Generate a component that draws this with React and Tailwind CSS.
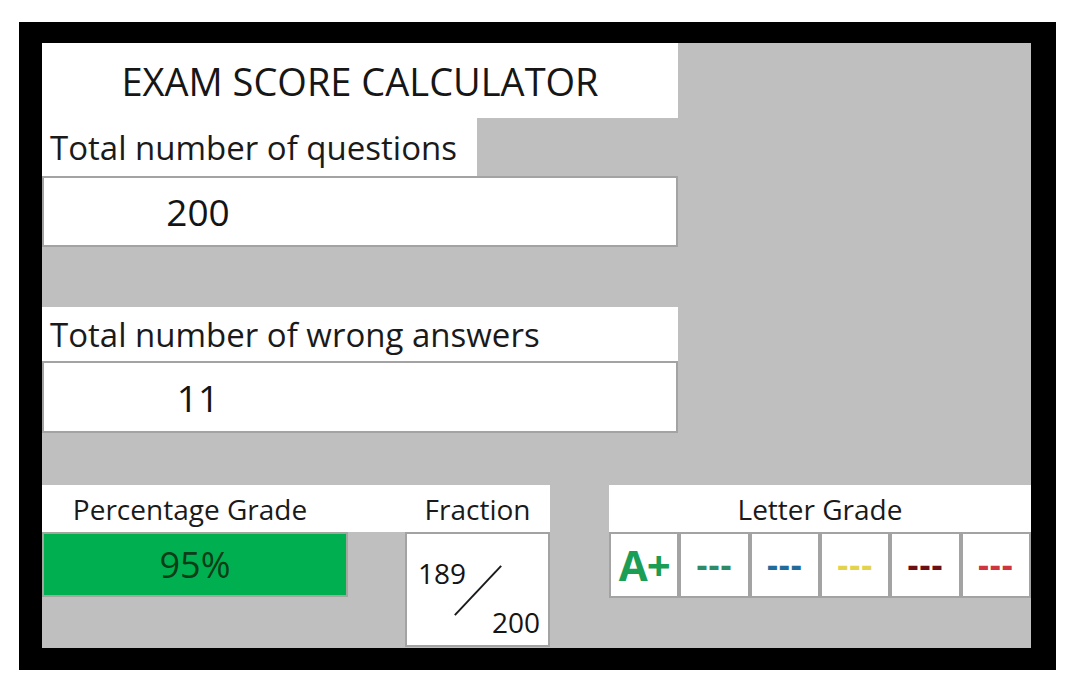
// Exam score calculator sheet: inputs on the left, results along the bottom
const grades = [
  { label: "A+", color: "text-[#1a9e55]", big: true },
  { label: "---", color: "text-[#2f8a68]" },
  { label: "---", color: "text-[#1f6c9c]" },
  { label: "---", color: "text-[#e3d24c]" },
  { label: "---", color: "text-[#6b0f14]" },
  { label: "---", color: "text-[#d0343f]" },
];

function InputBox({ value, className = "" }) {
  return (
    <div className={`w-[636px] bg-white border-2 border-[#a3a3a3] flex items-center ${className}`}>
      <span className="w-[308px] text-center text-[37px] leading-none text-[#141414]">{value}</span>
    </div>
  );
}

export default function App() {
  return (
    <div className="min-h-screen bg-white font-['Open_Sans',sans-serif] text-[#1a1a1a]">
      <div className="ml-[19px] pt-[22px]">
        {/* black frame */}
        <div className="w-[1037px] h-[648px] bg-black pl-[23px] pt-[21px] pr-[25px] pb-[22px]">
          <div className="h-full bg-[#bfbfbf] flex flex-col">
            <div className="w-[636px] h-[75px] bg-white flex items-center justify-center text-[38px] leading-none text-[#161616]">
              EXAM SCORE CALCULATOR
            </div>

            <div className="w-[435px] h-[58px] bg-white flex items-center pl-[8px] text-[33px] leading-none">
              Total number of questions
            </div>
            <InputBox value="200" className="h-[71px]" />

            <div className="h-[60px]" />

            <div className="w-[636px] h-[54px] bg-white flex items-center pl-[8px] text-[33px] leading-none">
              Total number of wrong answers
            </div>
            <InputBox value="11" className="h-[72px]" />

            <div className="h-[52px]" />

            {/* results */}
            <div className="flex">
              <div className="w-[508px] flex flex-col">
                <div className="h-[47px] bg-white flex items-center text-[28px] leading-none">
                  <span className="w-[296px] text-center">Percentage Grade</span>
                  <span className="ml-[67px] w-[145px] text-center">Fraction</span>
                </div>
                <div className="flex items-start">
                  <div className="w-[306px] h-[65px] bg-[#00b050] border-2 border-[#9fa79f] flex items-center justify-center text-[36px] leading-none text-[#0a3d18]">
                    95%
                  </div>
                  <div className="relative ml-[57px] w-[145px] h-[115px] bg-white border-2 border-[#a3a3a3] flex flex-col justify-between pt-[25px] pb-[9px] pl-[11px] pr-[8px] text-[28px] leading-none text-[#141414]">
                    <svg className="absolute inset-0 w-full h-full" viewBox="0 0 145 115">
                      <line x1="49" y1="84" x2="97" y2="33" stroke="#1a1a1a" strokeWidth="2" />
                    </svg>
                    <span className="self-start">189</span>
                    <span className="self-end">200</span>
                  </div>
                </div>
              </div>

              <div className="ml-[59px] w-[423px] flex flex-col">
                <div className="h-[47px] bg-white flex items-center justify-center text-[28px] leading-none">
                  Letter Grade
                </div>
                <div className="grid grid-cols-6 gap-[4px] p-[2px] bg-[#a3a3a3] h-[66px]">
                  {grades.map((g, i) => (
                    <div
                      key={i}
                      className={`bg-white flex items-center justify-center leading-none font-bold ${g.color} ${
                        g.big ? "text-[42px] tracking-[-1px]" : "text-[34px] tracking-[1px] pb-[2px]"
                      }`}
                    >
                      {g.label}
                    </div>
                  ))}
                </div>
              </div>
            </div>
          </div>
        </div>
      </div>
    </div>
  );
}
